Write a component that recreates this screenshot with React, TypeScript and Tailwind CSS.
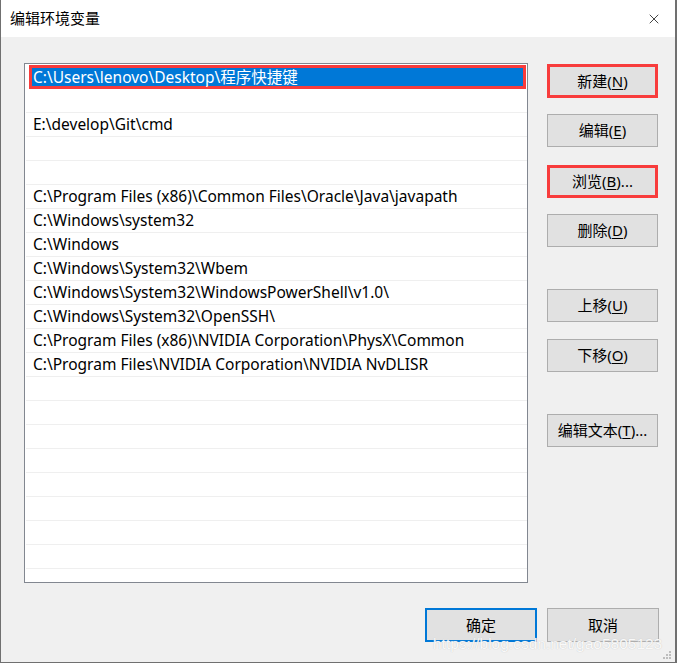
import { X } from 'lucide-react';

const font = { fontFamily: '"Noto Sans", "Noto Sans CJK SC", sans-serif' };

const paths = [
  'C:\\Users\\lenovo\\Desktop\\程序快捷键',
  '',
  'E:\\develop\\Git\\cmd',
  '',
  '',
  'C:\\Program Files (x86)\\Common Files\\Oracle\\Java\\javapath',
  'C:\\Windows\\system32',
  'C:\\Windows',
  'C:\\Windows\\System32\\Wbem',
  'C:\\Windows\\System32\\WindowsPowerShell\\v1.0\\',
  'C:\\Windows\\System32\\OpenSSH\\',
  'C:\\Program Files (x86)\\NVIDIA Corporation\\PhysX\\Common',
  'C:\\Program Files\\NVIDIA Corporation\\NVIDIA NvDLISR',
  '', '', '', '', '', '', '', '',
];

// label before the mnemonic, mnemonic letter, trailing text
const buttons = [
  { pre: '新建(', key: 'N', post: ')', mt: 'mt-[1px] h-[34px]', marked: true },
  { pre: '编辑(', key: 'E', post: ')', mt: 'mt-[16px] h-[33px]', marked: false },
  { pre: '浏览(', key: 'B', post: ')...', mt: 'mt-[18px] h-[33px]', marked: true },
  { pre: '删除(', key: 'D', post: ')', mt: 'mt-[16px] h-[33px]', marked: false },
  { pre: '上移(', key: 'U', post: ')', mt: 'mt-[42px] h-[33px]', marked: false },
  { pre: '下移(', key: 'O', post: ')', mt: 'mt-[17px] h-[33px]', marked: false },
  { pre: '编辑文本(', key: 'T', post: ')...', mt: 'mt-[42px] h-[33px]', marked: false },
];

const App = () => {
  return (
    <div
      className="relative w-[677px] h-[663px] bg-[#f0f0f0] border-l border-r-2 border-b border-[#707070] flex flex-col text-black"
      style={font}
    >
      {/* Title bar */}
      <div className="h-[37px] bg-white flex items-center justify-between pl-[9px] pr-[13px]">
        <span className="text-[15px] leading-none">编辑环境变量</span>
        <X size={16} strokeWidth={1.1} className="text-black" />
      </div>

      {/* List + side buttons */}
      <div className="flex pl-[23px] pt-[26px]">
        <div className="w-[504px] h-[520px] border border-[#828790] bg-white pt-[1px] overflow-hidden">
          {paths.map((p, i) =>
            i === 0 ? (
              <div key={i} className="h-[24px] pl-[4px] pr-[1px]">
                <div className="h-[24px] border-[3px] border-[#f83c3c] bg-[#0078d7] text-white text-[15.5px] leading-[18px] pl-[1px] whitespace-nowrap">
                  {p}
                </div>
              </div>
            ) : (
              <div
                key={i}
                className="h-[24px] ml-[1px] border-b border-[#efefef] text-[15.5px] leading-[23px] pl-[7px] whitespace-nowrap"
              >
                {p}
              </div>
            )
          )}
        </div>

        <div className="ml-[19px] w-[111px] flex flex-col">
          {buttons.map((b) => (
            <button
              key={b.key}
              className={`${b.mt} w-full bg-[#e1e1e1] text-[15px] flex items-center justify-center ${
                b.marked ? 'border-[3px] border-[#f83c3c]' : 'border border-[#adadad]'
              }`}
            >
              {b.pre}
              <span className="underline underline-offset-2">{b.key}</span>
              {b.post}
            </button>
          ))}
        </div>
      </div>

      {/* Footer */}
      <div className="flex justify-end gap-[10px] pr-[16px] mt-[25px]">
        <button className="w-[112px] h-[34px] bg-[#e1e1e1] border-2 border-[#0078d7] text-[15px]">确定</button>
        <button className="w-[112px] h-[34px] bg-[#e1e1e1] border border-[#adadad] text-[15px]">取消</button>
      </div>

      {/* csdn watermark */}
      <span
        className="absolute left-[432px] top-[634px] text-[15.5px] leading-[20px] whitespace-nowrap text-white/90"
        style={{ fontFamily: '"Liberation Sans", sans-serif', textShadow: '0 0 1px #b8b8b8' }}
      >
        https://blog.csdn.net/gao5805123
      </span>

      {/* resize grip */}
      <svg className="absolute right-[3px] bottom-[2px]" width="9" height="9" viewBox="0 0 9 9">
        <rect x="6" y="0" width="2" height="2" fill="#bdbdbd" />
        <rect x="3" y="3" width="2" height="2" fill="#bdbdbd" />
        <rect x="6" y="3" width="2" height="2" fill="#bdbdbd" />
        <rect x="0" y="6" width="2" height="2" fill="#bdbdbd" />
        <rect x="3" y="6" width="2" height="2" fill="#bdbdbd" />
        <rect x="6" y="6" width="2" height="2" fill="#bdbdbd" />
      </svg>
    </div>
  );
};

export default App;
